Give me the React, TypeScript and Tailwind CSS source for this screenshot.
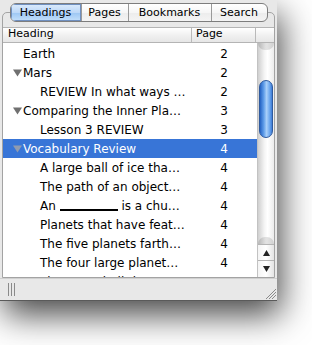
import React from "react";

type Row = { t: React.ReactNode; p: string; lvl: 1 | 2; tri?: boolean; sel?: boolean };

const rows: Row[] = [
  { t: "Earth", p: "2", lvl: 1 },
  { t: "Mars", p: "2", lvl: 1, tri: true },
  { t: "REVIEW In what ways …", p: "2", lvl: 2 },
  { t: "Comparing the Inner Pla…", p: "3", lvl: 1, tri: true },
  { t: "Lesson 3 REVIEW", p: "3", lvl: 2 },
  { t: "Vocabulary Review", p: "4", lvl: 1, tri: true, sel: true },
  { t: "A large ball of ice tha…", p: "4", lvl: 2 },
  { t: "The path of an object…", p: "4", lvl: 2 },
  {
    t: (
      <>
        An <span className="inline-block w-[58px] h-[2px] bg-black align-[-1px]"></span> is a chu…
      </>
    ),
    p: "4",
    lvl: 2,
  },
  { t: "Planets that have feat…", p: "4", lvl: 2 },
  { t: "The five planets farth…", p: "4", lvl: 2 },
  { t: "The four large planet…", p: "4", lvl: 2 },
  { t: "The same ball th…", p: "4", lvl: 2 },
];

function Tri({ sel }: { sel?: boolean }) {
  return (
    <svg width="9" height="8" viewBox="0 0 9 8" className="shrink-0">
      <polygon points="0,0.5 9,0.5 4.5,7.5" fill={sel ? "#8f9bb0" : "#707070"} />
    </svg>
  );
}

export default function App() {
  const tabs = [
    { n: "Headings", w: "w-[70px]", sel: true },
    { n: "Pages", w: "w-[47px]" },
    { n: "Bookmarks", w: "w-[83px]" },
    { n: "Search", w: "w-[56px]" },
  ];
  return (
    <div className="w-[312px] h-[345px] bg-white overflow-hidden font-['Lucida_Grande','DejaVu_Sans',sans-serif] text-black">
      <div className="w-[277px] h-[301px] bg-[#e8e8e8] flex flex-col border-b border-[#5a5a5a] shadow-[4px_14px_32px_rgba(0,0,0,0.72)]">
        {/* tabs */}
        <div className="pt-[3px] flex justify-center relative z-10">
          <div className="flex h-[19px] rounded-[6px] border border-[#7d7d7d] overflow-hidden bg-[linear-gradient(#ffffff,#f6f6f6_50%,#ececec_51%,#f4f4f4)]">
            {tabs.map((t, i) => (
              <div
                key={t.n}
                className={`${t.w} flex items-center justify-center text-[11px] leading-none ${
                  i > 0 ? "border-l border-[#9a9a9a]" : ""
                } ${
                  t.sel
                    ? "bg-[linear-gradient(#dcebfc,#bcd8f8_50%,#9cc6f3_51%,#c4e0fb)] shadow-[inset_0_0_0_1px_#6f8fbf]"
                    : ""
                }`}
              >
                {t.n}
              </div>
            ))}
          </div>
        </div>
        {/* box */}
        <div className="mt-[-10px] mx-[2px] flex-1 flex flex-col border border-[#a3a3a3] rounded-t-[5px] pt-[14px] min-h-0">
          {/* header */}
          <div className="flex h-[14px] bg-[linear-gradient(#ffffff,#f1f1f1_50%,#e6e6e6)] border-y border-[#b4b4b4] text-[11px] leading-[12px] box-content">
            <div className="w-[189px] pl-[5px] border-r border-[#b9b9b9]">Heading</div>
            <div className="w-[64px] pl-[4px] border-r border-[#b9b9b9]">Page</div>
            <div className="flex-1"></div>
          </div>
          {/* body */}
          <div className="flex-1 flex min-h-0">
            <div className="flex-1 bg-white overflow-hidden pt-[1px] text-[12px]">
              {rows.map((r, i) => (
                <div
                  key={i}
                  className={`flex h-[19px] items-center ${r.sel ? "bg-[#3875d7] text-white" : ""}`}
                >
                  <div className="w-[190px] flex items-center whitespace-nowrap overflow-hidden">
                    {r.lvl === 1 ? (
                      <div className="flex items-center">
                        <div className="w-[20px] flex justify-end pr-[1px]">{r.tri && <Tri sel={r.sel} />}</div>
                        <span className="ml-[0px]">{r.t}</span>
                      </div>
                    ) : (
                      <span className="pl-[37px]">{r.t}</span>
                    )}
                  </div>
                  <div className="w-[64px] text-center pr-[2px]">{r.p}</div>
                </div>
              ))}
            </div>
            {/* scrollbar */}
            <div className="w-[17px] flex flex-col border-l border-[#c2c2c2] bg-white">
              <div className="flex-1 relative bg-[linear-gradient(to_right,#cfcfcf,#f4f4f4_40%,#ffffff_60%,#ececec)]">
                <div className="absolute left-0 right-0 top-0 h-[7px] rounded-b-full bg-[linear-gradient(to_right,#a9a9a9,#d8d8d8_50%,#c4c4c4)] opacity-70"></div>
                <div className="absolute left-[1px] right-[1px] top-[37px] h-[58px] rounded-full border border-[#2f5a9e] bg-[linear-gradient(to_right,#2563c4,#5d9be8_30%,#a9d0fa_55%,#6fa8ee_80%,#3c7bd6)]"></div>
                <div className="absolute left-0 right-0 bottom-0 h-[7px] rounded-t-full bg-[linear-gradient(to_right,#a9a9a9,#d8d8d8_50%,#c4c4c4)] opacity-70"></div>
              </div>
              <div className="h-[16px] border-t border-[#b4b4b4] bg-[linear-gradient(to_right,#f4f4f4,#ffffff_50%,#e4e4e4)] flex items-center justify-center">
                <svg width="7" height="6" viewBox="0 0 7 6"><polygon points="3.5,0 7,6 0,6" fill="#222" /></svg>
              </div>
              <div className="h-[17px] border-t border-[#b4b4b4] bg-[linear-gradient(to_right,#f4f4f4,#ffffff_50%,#e4e4e4)] flex items-center justify-center">
                <svg width="7" height="6" viewBox="0 0 7 6"><polygon points="0,0 7,0 3.5,6" fill="#222" /></svg>
              </div>
            </div>
          </div>
        </div>
        {/* bottom bar */}
        <div className="h-[22px] flex items-center justify-between px-[8px] border-t border-[#d0d0d0]">
          <div className="flex gap-[2px] h-[13px]">
            <div className="w-[1px] bg-[#8a8a8a]"></div>
            <div className="w-[1px] bg-[#8a8a8a]"></div>
            <div className="w-[1px] bg-[#8a8a8a]"></div>
          </div>
          <svg width="11" height="11" viewBox="0 0 11 11" className="mr-[-7px] mt-[8px]">
            <line x1="1" y1="11" x2="11" y2="1" stroke="#8a8a8a" />
            <line x1="4" y1="11" x2="11" y2="4" stroke="#8a8a8a" />
            <line x1="7" y1="11" x2="11" y2="7" stroke="#8a8a8a" />
          </svg>
        </div>
      </div>
    </div>
  );
}
